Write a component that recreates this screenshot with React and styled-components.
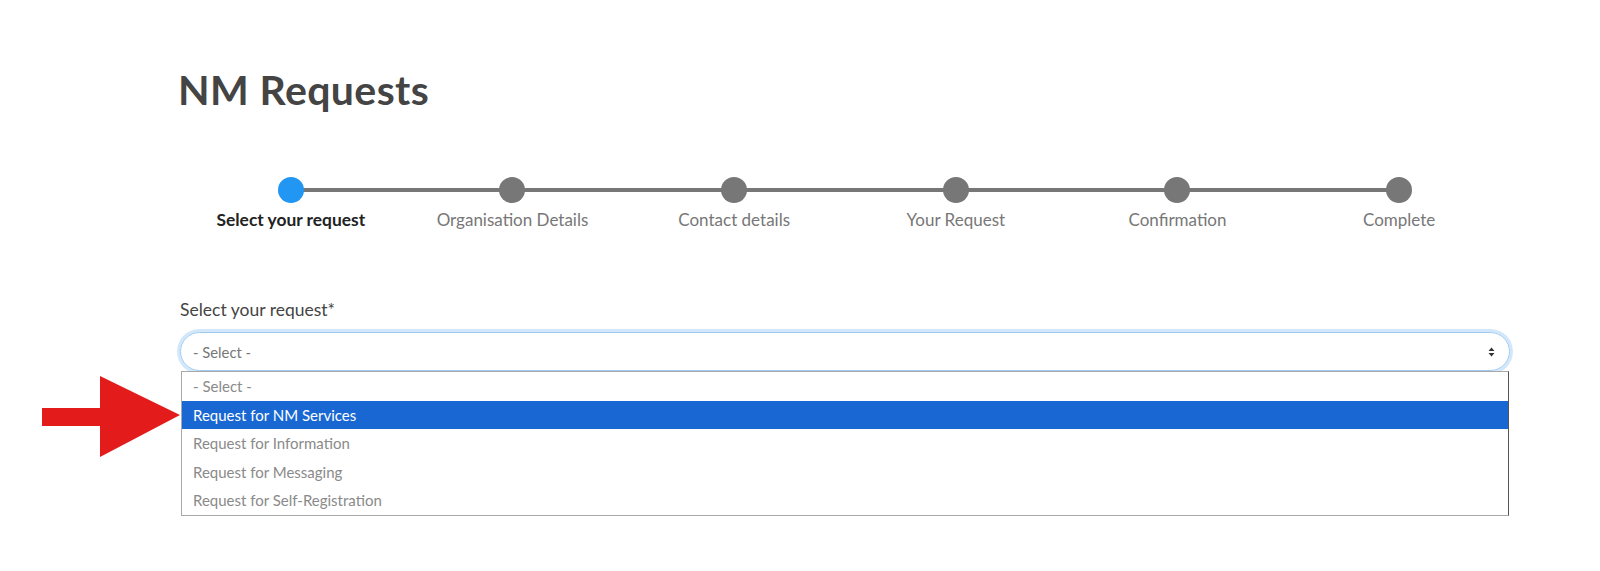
import React from 'react';
import styled, { createGlobalStyle } from 'styled-components';

const GlobalStyle = createGlobalStyle`
    body {
        margin: 0;
        background: #fff;
        font-family: Lato, 'Open Sans', sans-serif;
    }
`

const Page = styled.div`
    position: relative;
    width: 1600px;
    height: 571px;
    overflow: hidden;
`

const Content = styled.div`
    width: 1330px;
    margin-left: 180px;
    padding-top: 66px;
`

const Title = styled.h1`
    margin: 0 0 0 -2px;
    font-size: 41px;
    line-height: 48px;
    font-weight: 700;
    color: #444;
    letter-spacing: 0.4px;
`

const Steps = styled.ol`
    display: grid;
    grid-template-columns: repeat(6, 1fr);
    list-style: none;
    margin: 63px 0 0;
    padding: 0;
`

const Step = styled.li`
    position: relative;
    display: flex;
    flex-direction: column;
    align-items: center;
    gap: 7px;
    &:not(:last-child)::after {
        content: '';
        position: absolute;
        top: 11px;
        left: 50%;
        width: 100%;
        height: 4px;
        background: #777;
    }
`

const Dot = styled.span`
    position: relative;
    z-index: 1;
    width: 26px;
    height: 26px;
    border-radius: 50%;
    background: ${props => props.active ? '#2196f3' : '#777'};
`

const StepLabel = styled.span`
    font-size: ${props => props.active ? '17.4px' : '17px'};
    line-height: 20px;
    color: ${props => props.active ? '#222' : '#777'};
    font-weight: ${props => props.active ? 700 : 400};
`

const Field = styled.div`
    margin-top: 70px;
`

const FieldLabel = styled.label`
    display: block;
    font-size: 17.5px;
    line-height: 20px;
    color: #444;
`

const SelectBox = styled.div`
    display: flex;
    align-items: center;
    justify-content: space-between;
    box-sizing: border-box;
    height: 39px;
    margin-top: 12px;
    padding: 0 14px 0 12px;
    border: 1px solid #9fc9f2;
    border-radius: 19.5px;
    box-shadow: 0 0 0 3px #d3e7fb;
    font-size: 14.8px;
    color: #777;
`

const Options = styled.ul`
    list-style: none;
    margin: 0 0 0 1px;
    padding: 0;
    width: 1328px;
    box-sizing: border-box;
    border: 1px solid #a9a9a9;
    border-right-color: #555;
`

const Option = styled.li`
    height: 28.6px;
    line-height: 28.6px;
    padding-left: 11px;
    font-size: 15px;
    color: ${props => props.selected ? '#fff' : '#8a8a8a'};
    background: ${props => props.selected ? '#1967d2' : '#fff'};
`

const Pointer = styled.svg`
    position: absolute;
    left: 40px;
    top: 375px;
`

const steps = ['Select your request', 'Organisation Details', 'Contact details', 'Your Request', 'Confirmation', 'Complete'];
const options = ['- Select -', 'Request for NM Services', 'Request for Information', 'Request for Messaging', 'Request for Self-Registration'];

const App = () => (
    <Page>
        <GlobalStyle />
        <Content>
            <Title>NM Requests</Title>
            <Steps>
                {steps.map((s, i) => (
                    <Step key={s}>
                        <Dot active={i === 0} />
                        <StepLabel active={i === 0}>{s}</StepLabel>
                    </Step>
                ))}
            </Steps>
            <Field>
                <FieldLabel>Select your request*</FieldLabel>
                <SelectBox>
                    <span>- Select -</span>
                    <svg width="7" height="10" viewBox="0 0 7 10">
                        <path d="M3.5 0.5 L6.5 4 H0.5 Z M3.5 9.5 L6.5 6 H0.5 Z" fill="#333" />
                    </svg>
                </SelectBox>
                <Options>
                    {options.map((o, i) => (
                        <Option key={o} selected={i === 1}>{o}</Option>
                    ))}
                </Options>
            </Field>
        </Content>
        <Pointer width="142" height="84" viewBox="0 0 142 84">
            <path d="M2 33 H60 V1 L140 40 L60 82 V51 H2 Z" fill="#e31b1b" />
        </Pointer>
    </Page>
);

export default App;
